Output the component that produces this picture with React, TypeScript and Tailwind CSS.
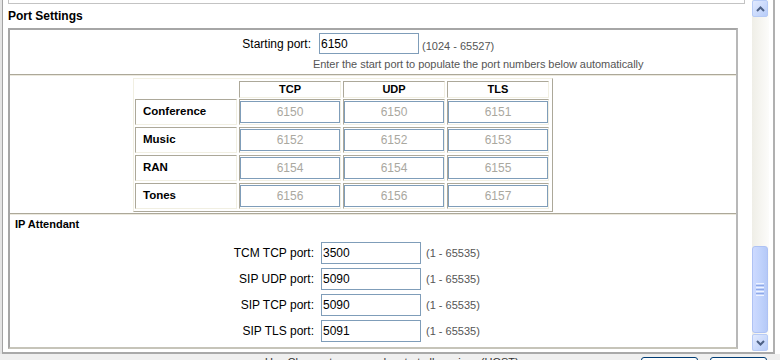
import React from "react";

const rows = [
  ["Conference", "6150", "6150", "6151"],
  ["Music", "6152", "6152", "6153"],
  ["RAN", "6154", "6154", "6155"],
  ["Tones", "6156", "6156", "6157"],
];

const ipRows = [
  ["TCM TCP port:", "3500"],
  ["SIP UDP port:", "5090"],
  ["SIP TCP port:", "5090"],
  ["SIP TLS port:", "5091"],
];

function Chevron({ up }: { up?: boolean }) {
  return (
    <svg width="9" height="6" viewBox="0 0 9 6">
      <polyline
        points={up ? "1,5 4.5,1.5 8,5" : "1,1 4.5,4.5 8,1"}
        fill="none"
        stroke="#4d6185"
        strokeWidth="2"
      />
    </svg>
  );
}

function ScrollButton({ up }: { up?: boolean }) {
  return (
    <div className="h-[17px] w-[16px] rounded-[2px] border border-[#b7cbf6] bg-gradient-to-br from-[#e2eafe] to-[#b8cdf9] flex items-center justify-center">
      <Chevron up={up} />
    </div>
  );
}

function Scrollbar() {
  return (
    <div className="w-[17px] h-[351px] flex flex-col bg-gradient-to-r from-[#efeee7] to-[#fcfcfa]">
      <ScrollButton up />
      <div className="flex-1" />
      <div className="h-[87px] w-[16px] rounded-[3px] border border-[#aec2f4] bg-gradient-to-r from-[#cddaff] via-[#c1d3fc] to-[#b5c9f7] flex flex-col items-center justify-center gap-[1px]">
        <div className="w-[8px] h-[1px] bg-[#eef3ff]" />
        <div className="w-[8px] h-[1px] bg-[#8fa9e8]" />
        <div className="w-[8px] h-[1px] bg-[#eef3ff]" />
        <div className="w-[8px] h-[1px] bg-[#8fa9e8]" />
        <div className="w-[8px] h-[1px] bg-[#eef3ff]" />
        <div className="w-[8px] h-[1px] bg-[#8fa9e8]" />
        <div className="w-[8px] h-[1px] bg-[#eef3ff]" />
      </div>
      <div className="h-[1px]" />
      <ScrollButton />
    </div>
  );
}

const insetCell =
  "border border-t-[#aca899] border-l-[#aca899] border-b-[#f1efe2] border-r-[#f1efe2] bg-white";

function PortTable() {
  return (
    <div className="w-[420px] h-[134px] border border-t-[#f1efe2] border-l-[#f1efe2] border-b-[#aca899] border-r-[#aca899] pl-[1px] pt-[2px] flex flex-col">
      <div className="flex gap-x-[2px] h-[17px] mb-[1px]">
        <div className="w-[102px]" />
        {["TCP", "UDP", "TLS"].map((h) => (
          <div
            key={h}
            className={`w-[102px] h-[17px] ${insetCell} flex items-center justify-center text-[11px] font-bold leading-none`}
          >
            {h}
          </div>
        ))}
      </div>
      <div className="flex flex-col gap-y-[2px]">
        {rows.map((r) => (
          <div key={r[0]} className="flex gap-x-[2px] h-[26px]">
            <div
              className={`w-[102px] h-[26px] ${insetCell} flex items-center pl-[7px] text-[11.5px] font-bold`}
            >
              {r[0]}
            </div>
            {r.slice(1).map((v, i) => (
              <div
                key={i}
                className={`w-[102px] h-[26px] ${insetCell} py-[1px] flex`}
              >
                <div className="flex-1 h-[22px] border border-[#7f9db9] bg-white flex items-center justify-center text-[12px] text-[#aaa89f]">
                  {v}
                </div>
              </div>
            ))}
          </div>
        ))}
      </div>
    </div>
  );
}

const sepCls = "h-[2px] border-t border-t-[#aca899] border-b border-b-[#ece9de]";

export default function App() {
  return (
    <div className="w-[780px] h-[360px] overflow-hidden bg-white font-['Liberation_Sans',Arial,sans-serif] text-black">
      <div className="w-[775px] h-[354px] border-l-2 border-l-[#e4e4e4]">
        <div className="w-[773px] h-[354px] bg-white border-l border-l-[#a3a3a3] border-r-2 border-r-[#b0b0b0] border-b-2 border-b-[#a9a9a9] flex">
          <div className="w-[749px] pl-[5px] flex flex-col">
            <div className="w-[737px] h-[4px] border-l border-r border-b border-[#c3c3c3]" />
            <div className="mt-[5px] h-[14px] leading-[14px] text-[12px] font-bold">
              Port Settings
            </div>
            <div className="mt-[5px] w-[730px] h-[321px] border-2 border-t-[#a6a6a6] border-l-[#a6a6a6] border-b-[#c6c4b9] border-r-[#b8b8b8] flex flex-col">
              {/* Starting port */}
              <div className="h-[44px] pt-[3px] flex flex-col">
                <div className="flex items-center h-[21px]">
                  <div className="w-[305px] pr-[4px] text-right text-[12px]">Starting port:</div>
                  <input
                    readOnly
                    defaultValue="6150"
                    className="ml-[4px] w-[100px] h-[21px] border border-[#7f9db9] pl-[1px] text-[12px] text-black outline-none"
                  />
                  <span className="ml-[3px] mt-[6px] text-[11px] text-[#555]">(1024 - 65527)</span>
                </div>
                <div className="mt-[4px] pl-[303px] leading-[13px] text-[11px] text-[#555] tracking-[-0.05px]">
                  Enter the start port to populate the port numbers below automatically
                </div>
              </div>
              <div className={sepCls} />
              {/* Table */}
              <div className="h-[137px] pt-[2px] pl-[123px]">
                <PortTable />
              </div>
              <div className={sepCls} />
              {/* IP Attendant */}
              <div className="flex-1 flex flex-col">
                <div className="pt-[3px] pl-[5px] leading-[13px] text-[11px] font-bold">IP Attendant</div>
                <div className="mt-[11px] flex flex-col gap-y-[4px]">
                  {ipRows.map(([label, val]) => (
                    <div key={label} className="flex items-center h-[22px]">
                      <div className="w-[305px] pr-[1px] text-right text-[12px]">{label}</div>
                      <input
                        readOnly
                        defaultValue={val}
                        className="ml-[6px] w-[100px] h-[22px] border border-[#7f9db9] pl-[1px] text-[12px] text-black outline-none"
                      />
                      <span className="ml-[5px] text-[11px] text-[#555]">(1 - 65535)</span>
                    </div>
                  ))}
                </div>
              </div>
            </div>
          </div>
          <Scrollbar />
        </div>
      </div>
      <div className="h-[6px] bg-[#efefef] flex">
        <div className="ml-[265px] pt-[2px] leading-[13px] text-[11px] text-[#333] whitespace-nowrap">
          Use Change to save and restart all services (HOST).
        </div>
        <div className="ml-auto flex gap-[12px] mr-[13px]">
          <div className="mt-[3px] w-[57px] h-[22px] rounded-[3px] border border-[#003c74] bg-gradient-to-b from-white to-[#ecebe6]" />
          <div className="mt-[3px] w-[57px] h-[22px] rounded-[3px] border border-[#003c74] bg-gradient-to-b from-white to-[#ecebe6]" />
        </div>
      </div>
    </div>
  );
}
